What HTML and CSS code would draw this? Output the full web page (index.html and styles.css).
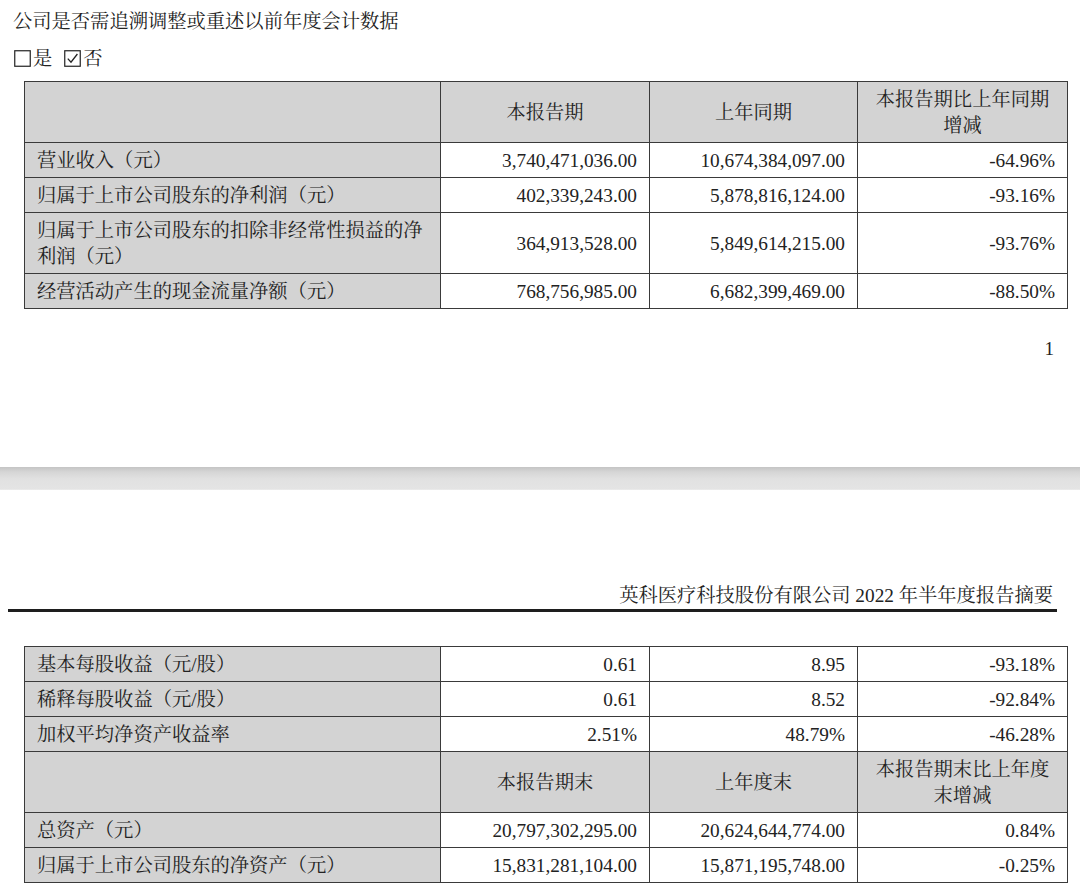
FILE: index.html
```html
<!DOCTYPE html>
<html lang="zh-CN">
<head>
<meta charset="utf-8">
<title>英科医疗科技股份有限公司 2022 年半年度报告摘要</title>
<link rel="stylesheet" href="styles.css">
</head>
<body>
<section class="page page-top">
  <p class="title">公司是否需追溯调整或重述以前年度会计数据</p>
  <p class="choice"><svg class="box" viewBox="0 0 17 17" width="17" height="17"><rect x="0.75" y="0.75" width="15.5" height="15.5" fill="none" stroke="#222" stroke-width="1.2"/></svg>是<span class="sp"></span><svg class="box" viewBox="0 0 17 17" width="17" height="17"><rect x="0.75" y="0.75" width="15.5" height="15.5" fill="none" stroke="#222" stroke-width="1.2"/><path d="M3.8 8.6 L7 12.2 L13.4 4" fill="none" stroke="#222" stroke-width="1.3"/></svg>否</p>

  <table class="fin">
    <colgroup><col class="c-label"><col class="c-a"><col class="c-b"><col class="c-c"></colgroup>
    <tr class="tall">
      <td class="shade"></td>
      <td class="shade ctr">本报告期</td>
      <td class="shade ctr">上年同期</td>
      <td class="shade ctr">本报告期比上年同期<br>增减</td>
    </tr>
    <tr><td class="shade lbl">营业收入（元）</td><td class="num">3,740,471,036.00</td><td class="num">10,674,384,097.00</td><td class="num">-64.96%</td></tr>
    <tr><td class="shade lbl">归属于上市公司股东的净利润（元）</td><td class="num">402,339,243.00</td><td class="num">5,878,816,124.00</td><td class="num">-93.16%</td></tr>
    <tr class="tall"><td class="shade lbl">归属于上市公司股东的扣除非经常性损益的净利润（元）</td><td class="num">364,913,528.00</td><td class="num">5,849,614,215.00</td><td class="num">-93.76%</td></tr>
    <tr><td class="shade lbl">经营活动产生的现金流量净额（元）</td><td class="num">768,756,985.00</td><td class="num">6,682,399,469.00</td><td class="num">-88.50%</td></tr>
  </table>

  <p class="page-no">1</p>
</section>

<div class="page-gap"></div>

<section class="page page-bottom">
  <p class="running-head">英科医疗科技股份有限公司 2022 年半年度报告摘要</p>

  <table class="fin fin2">
    <colgroup><col class="c-label"><col class="c-a"><col class="c-b"><col class="c-c"></colgroup>
    <tr><td class="shade lbl">基本每股收益（元/股）</td><td class="num">0.61</td><td class="num">8.95</td><td class="num">-93.18%</td></tr>
    <tr><td class="shade lbl">稀释每股收益（元/股）</td><td class="num">0.61</td><td class="num">8.52</td><td class="num">-92.84%</td></tr>
    <tr><td class="shade lbl">加权平均净资产收益率</td><td class="num">2.51%</td><td class="num">48.79%</td><td class="num">-46.28%</td></tr>
    <tr class="tall">
      <td class="shade"></td>
      <td class="shade ctr">本报告期末</td>
      <td class="shade ctr">上年度末</td>
      <td class="shade ctr">本报告期末比上年度<br>末增减</td>
    </tr>
    <tr><td class="shade lbl">总资产（元）</td><td class="num">20,797,302,295.00</td><td class="num">20,624,644,774.00</td><td class="num">0.84%</td></tr>
    <tr><td class="shade lbl">归属于上市公司股东的净资产（元）</td><td class="num">15,831,281,104.00</td><td class="num">15,871,195,748.00</td><td class="num">-0.25%</td></tr>
  </table>
</section>
</body>
</html>
```

FILE: styles.css
```css
html, body {
  margin: 0;
  padding: 0;
  background: #ffffff;
}

body {
  font-family: "Liberation Serif", "Noto Serif CJK SC", "Noto Sans CJK SC", serif;
  font-size: 19.3px;
  color: #222222;
  width: 1080px;
  overflow: hidden;
}

.page {
  box-sizing: border-box;
  width: 1080px;
}

.page-top {
  height: 467px;
  padding-top: 8px;
}

.title {
  margin: 0;
  padding-left: 13px;
  line-height: 27px;
}

.choice {
  margin: 10px 0 0 0;
  padding-left: 14px;
  line-height: 27px;
  display: flex;
  align-items: center;
}

.choice .box {
  display: block;
  margin-right: 2px;
}

.choice .sp {
  display: inline-block;
  width: 12px;
}

.fin {
  border-collapse: collapse;
  table-layout: fixed;
  width: 1043px;
  margin: 9px 0 0 24px;
  border: 1px solid #3a3a3a;
}

.fin td {
  border: 1px solid #3a3a3a;
  height: 32px;
  padding: 2px 12px 0 12px;
  line-height: 26px;
  vertical-align: middle;
  white-space: nowrap;
}

.fin tr.tall td {
  height: 58px;
  white-space: normal;
}

.c-label { width: 416px; }
.c-a { width: 209px; }
.c-b { width: 208px; }
.c-c { width: 210px; }

.shade {
  background: #d3d3d3;
}

.ctr {
  text-align: center;
}

.lbl {
  text-align: left;
  padding-left: 12px;
}

.num {
  text-align: right;
  background: #ffffff;
}

.page-no {
  margin: 27px 0 0 0;
  padding-right: 26px;
  text-align: right;
  line-height: 26px;
  font-size: 19px;
}

.page-gap {
  height: 23px;
  background: linear-gradient(to bottom, #c4c4c4 0px, #d6d6d6 5px, #e1e1e1 12px, #e4e4e4 22px, #efefef 23px);
}

.page-bottom {
  padding-top: 93px;
  height: 400px;
}

.running-head {
  margin: 0 23px 0 8px;
  padding: 0 4px 0 0;
  text-align: right;
  line-height: 26px;
  border-bottom: 3px solid #1e1e1e;
}

.fin2 {
  margin-top: 34px;
}
```
